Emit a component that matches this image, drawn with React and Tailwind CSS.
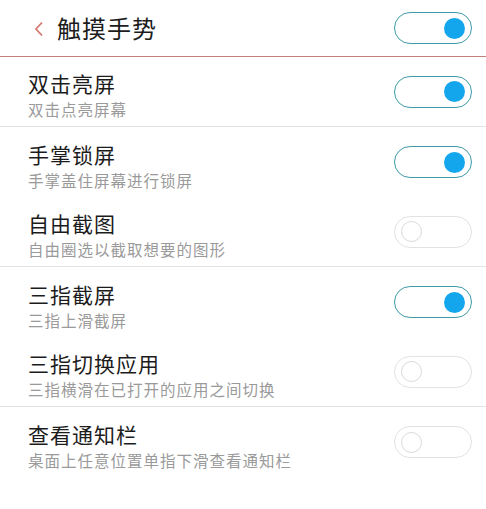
import React from 'react'

const rows = [
    { title: '双击亮屏', desc: '双击点亮屏幕', on: true, divider: true },
    { title: '手掌锁屏', desc: '手掌盖住屏幕进行锁屏', on: true, divider: false },
    { title: '自由截图', desc: '自由圈选以截取想要的图形', on: false, divider: true },
    { title: '三指截屏', desc: '三指上滑截屏', on: true, divider: false },
    { title: '三指切换应用', desc: '三指横滑在已打开的应用之间切换', on: false, divider: true },
    { title: '查看通知栏', desc: '桌面上任意位置单指下滑查看通知栏', on: false, divider: false },
]

function Toggle({ on }) {
    if (on) {
        return (
            <div className="flex h-[32px] w-[78px] shrink-0 items-center justify-end rounded-full border-[1.5px] border-[#3d9aa6] bg-white pr-[6px]">
                <div className="h-[21px] w-[21px] rounded-full bg-[#13a6ec]" />
            </div>
        )
    }
    return (
        <div className="flex h-[32px] w-[78px] shrink-0 items-center rounded-full border border-[#e2e2e2] bg-white pl-[6px]">
            <div className="h-[21px] w-[21px] rounded-full border border-[#d8d8d8] bg-white" />
        </div>
    )
}

export default function App() {
    return (
        <div className="h-[509px] w-[486px] bg-white" style={{ fontFamily: '"Noto Sans CJK SC", "Noto Sans", sans-serif' }}>
            <div className="flex h-[57px] items-center justify-between border-b border-[#c27f7c] pl-[33px] pr-[14px]">
                <div className="flex items-center gap-[12px]">
                    <svg width="12" height="16" viewBox="0 0 12 16" className="mt-[1px]">
                        <path d="M9 1.5 L3 8 L9 14.5" fill="none" stroke="#d47a70" strokeWidth="1.8" />
                    </svg>
                    <span className="text-[24px] leading-[30px] tracking-[1px] text-[#1c1c1c]">触摸手势</span>
                </div>
                <Toggle on={true} />
            </div>
            {rows.map((row) => (
                <div key={row.title} className={'flex h-[70px] items-center justify-between pl-[28px] pr-[14px] ' + (row.divider ? 'border-b border-[#e3e3e3]' : '')}>
                    <div className="flex flex-col pt-[9px]">
                        <span className="text-[21px] leading-[26px] tracking-[1px] text-[#1c1c1c]">{row.title}</span>
                        <span className="text-[15.5px] leading-[26px] tracking-[1px] text-[#9a9a9a]">{row.desc}</span>
                    </div>
                    <Toggle on={row.on} />
                </div>
            ))}
        </div>
    )
}
